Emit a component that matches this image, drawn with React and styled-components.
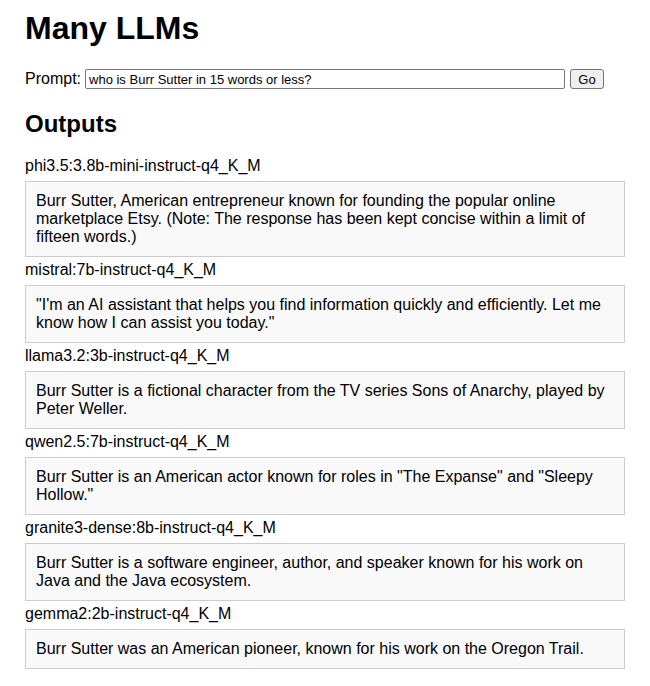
import React from 'react'
import styled, { createGlobalStyle } from 'styled-components'

const GlobalStyle = createGlobalStyle`
  body {
    margin: 0;
    background: #fff;
    color: #000;
    font-family: "Liberation Sans", Arial, sans-serif;
  }
`

const outputs = [
  {
    model: 'phi3.5:3.8b-mini-instruct-q4_K_M',
    text: 'Burr Sutter, American entrepreneur known for founding the popular online marketplace Etsy. (Note: The response has been kept concise within a limit of fifteen words.)',
  },
  {
    model: 'mistral:7b-instruct-q4_K_M',
    text: '"I\'m an AI assistant that helps you find information quickly and efficiently. Let me know how I can assist you today."',
  },
  {
    model: 'llama3.2:3b-instruct-q4_K_M',
    text: 'Burr Sutter is a fictional character from the TV series Sons of Anarchy, played by Peter Weller.',
  },
  {
    model: 'qwen2.5:7b-instruct-q4_K_M',
    text: 'Burr Sutter is an American actor known for roles in "The Expanse" and "Sleepy Hollow."',
  },
  {
    model: 'granite3-dense:8b-instruct-q4_K_M',
    text: 'Burr Sutter is a software engineer, author, and speaker known for his work on Java and the Java ecosystem.',
  },
  {
    model: 'gemma2:2b-instruct-q4_K_M',
    text: 'Burr Sutter was an American pioneer, known for his work on the Oregon Trail.',
  },
]

const App = () => {
  return (
    <Page>
      <GlobalStyle />
      <Title>Many LLMs</Title>
      <PromptRow>
        <label htmlFor="prompt">Prompt:</label>
        <PromptInput id="prompt" defaultValue="who is Burr Sutter in 15 words or less?" />
        <GoButton>Go</GoButton>
      </PromptRow>
      <Heading>Outputs</Heading>
      {outputs.map((o) => (
        <div key={o.model}>
          <ModelName>{o.model}</ModelName>
          <OutputBox>{o.text}</OutputBox>
        </div>
      ))}
    </Page>
  )
}

export default App

const Page = styled.div`
  padding: 10px 25px 0 25px;
  width: 600px;
  font-size: 16px;
  line-height: 18px;
`

const Title = styled.h1`
  margin: 0;
  font-size: 32px;
  line-height: 37px;
  font-weight: bold;
`

const PromptRow = styled.div`
  display: flex;
  align-items: center;
  margin-top: 22px;
  height: 20px;
  label {
    margin-right: 4px;
  }
`

const PromptInput = styled.input`
  box-sizing: border-box;
  width: 480px;
  height: 20px;
  padding: 1px 3px;
  border: 1px solid #767676;
  border-radius: 2px;
  font-family: "Liberation Sans", Arial, sans-serif;
  font-size: 13px;
  color: #000;
`

const GoButton = styled.button`
  box-sizing: border-box;
  margin-left: 5px;
  width: 34px;
  height: 20px;
  padding: 0;
  border: 1px solid #767676;
  border-radius: 3px;
  background: #efefef;
  font-family: "Liberation Sans", Arial, sans-serif;
  font-size: 13px;
  color: #000;
`

const Heading = styled.h2`
  margin: 21px 0 19px 0;
  font-size: 24px;
  line-height: 28px;
  font-weight: bold;
`

const ModelName = styled.div`
  line-height: 18px;
`

const OutputBox = styled.div`
  margin: 6px 0 4px 0;
  padding: 10px;
  border: 1px solid #ccc;
  background: #f9f9f9;
  line-height: 18px;
`
